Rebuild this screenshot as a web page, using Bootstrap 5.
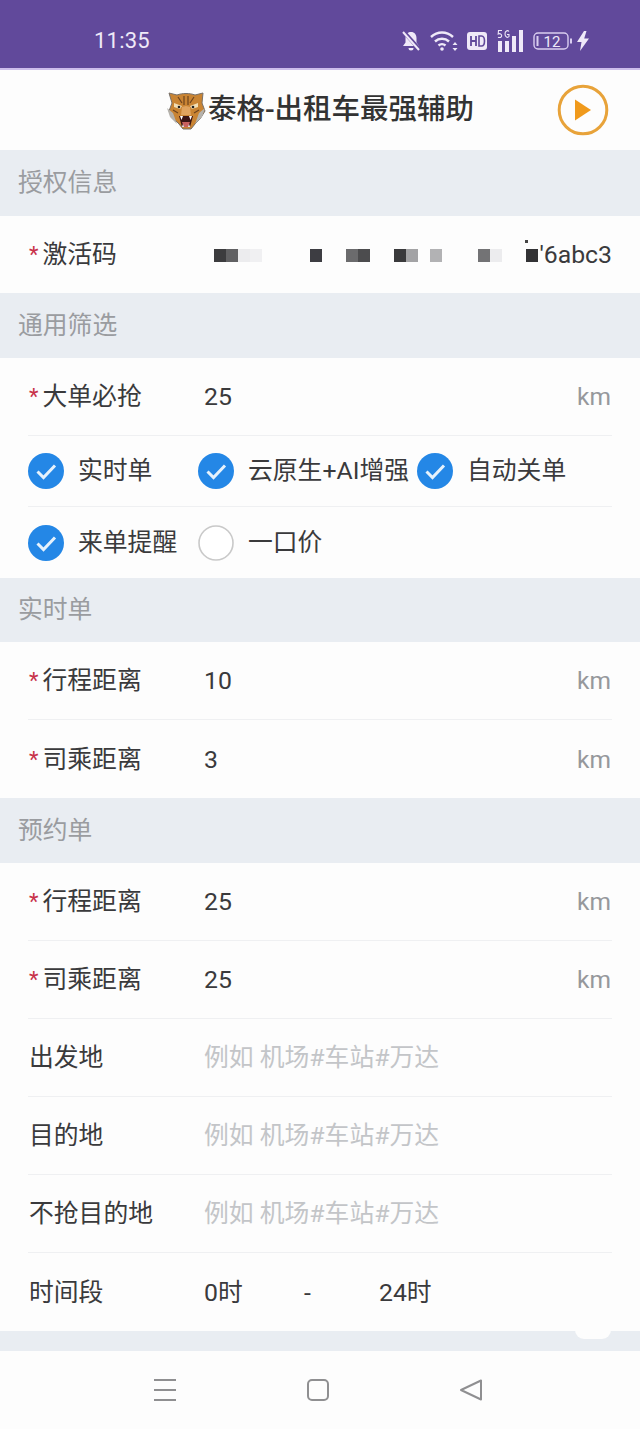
<!DOCTYPE html>
<html lang="zh">
<head>
<meta charset="utf-8">
<title>泰格</title>
<link href="https://cdn.jsdelivr.net/npm/bootstrap@5.3.0/dist/css/bootstrap.min.css" rel="stylesheet">
<style>
html,body{margin:0;height:1429px;overflow:hidden;background:#fdfdfd}
body{font-family:Roboto,"Noto Sans CJK SC",sans-serif;color:#3a3a3c;font-size:24.8px;line-height:1.2}
.status-strip{height:70px;background:#61499b;color:#efe9f8;border-bottom:2px solid #cdbdec;padding:0 51px 0 94px}
.status-time{font-size:22px;letter-spacing:.2px;padding-top:15px}
.status-icons{padding-top:13px;gap:9px}
.head-strip{height:80px;background:#fdfdfd;position:relative}
.head-title{font-size:28.5px;font-weight:500;color:#333;margin-left:2px}
.tiger{width:40px;height:40px}
.play-wrap{position:absolute;right:31px;top:14px;width:52px;height:52px}
.sec-head{background:#e9edf2;height:65px;padding-left:18px;color:#9a9ca0}
.sec-head.h66{height:66px}
.sec-head.h64{height:64px}
.rows{background:#fdfdfd;padding:0 28px}
.form-line{height:78px;border-bottom:1px solid #eff0f2;padding-top:1px}
.form-line.last{border-bottom:0}
.f-label{width:176px;flex:none;padding-left:1px}
.req{color:#c8324a;font-size:22px;margin-right:4px;position:relative;top:-1px}
.f-value{flex:1 1 auto;min-width:0}
.unit{color:#96989c;margin-right:1px;font-size:24.5px}
.ph{color:#c3c5c8}
.masked{height:13px;width:323px;flex:none;margin-right:2px;position:relative}
.px{display:block;width:12px;height:13px;flex:none}
.mask-dot{position:absolute;right:9px;top:-9px;width:3px;height:3px;background:#444}
.chk-row{height:71px;border-bottom:1px solid #eff0f2}
.chk-row.last{border-bottom:0}
.chk-cell{display:flex;align-items:center;gap:14px;flex:none}
.c1{width:170px}
.c2{width:219px}
.tick{width:36px;height:36px;flex:none}
.tail{height:20px;background:#e9edf2;position:relative}
.tail-notch{position:absolute;left:575px;top:-1px;width:36px;height:9px;background:#fdfdfd;border-radius:0 0 14px 14px}
.nav-strip{height:78px;background:#fdfdfd;padding-right:4px}
.nav-spot{width:153px;display:flex;justify-content:center}
</style>
</head>
<body>
<div class="status-strip d-flex justify-content-between align-items-center">
  <div class="status-time">11:35</div>
  <div class="status-icons d-flex align-items-center">
    <svg width="20" height="22" viewBox="0 0 20 22" fill="#efe9f8"><path d="M10 2c3.600 0 5.500 2.700 5.500 6v4.500L18 16H2l2.500-3.500V8C4.500 4.700 6.400 2 10 2z"/><path d="M7.500 18h5a2.500 2.500 0 0 1-5 0z"/><path d="M2 1l17 19" stroke="#61499b" stroke-width="4"/><path d="M2 2l16 18" stroke="#efe9f8" stroke-width="2"/></svg>
    <svg width="28" height="22" viewBox="0 0 28 22" fill="none" stroke="#efe9f8" stroke-width="2.400"><path d="M1 7c6.500-6 15.500-6 22 0"/><path d="M5 11.500c4-3.700 10-3.700 14 0"/><path d="M8.500 15.500c2-1.800 5-1.800 7 0"/><circle cx="12" cy="19" r="1.800" fill="#efe9f8" stroke="none"/><path d="M25 12l-2.500 3h5zM25 21l-2.500-3h5z" fill="#efe9f8" stroke="none"/></svg>
    <svg width="20" height="18" viewBox="0 0 20 18"><rect width="20" height="18" rx="3" fill="#efe9f8"/><path d="M4 4v10M9 4v10M4 9h5" stroke="#61499b" stroke-width="1.800" fill="none"/><path d="M12 4v10h2.500c2 0 3-2 3-5s-1-5-3-5z" stroke="#61499b" stroke-width="1.600" fill="none"/></svg>
    <svg width="28" height="24" viewBox="0 0 28 24" fill="#efe9f8"><rect x="2" y="12" width="4" height="11"/><rect x="9" y="12" width="4" height="11"/><rect x="16" y="7" width="4" height="16"/><rect x="23" y="1" width="4" height="22"/><path d="M6 1.500H2.500L2.200 5c1.800-.8 3.500 0 3.500 1.700S3.800 9 2 8.200M13 2.500C11.500.8 9 2 9 5s2.500 4.200 4 2.500V5.500h-2" fill="none" stroke="#efe9f8" stroke-width="1.100"/></svg>
    <svg width="40" height="20" viewBox="0 0 40 20" fill="none" stroke="#d9cdf0" stroke-width="1.400"><rect x="1" y="2" width="34" height="16" rx="4"/><rect x="3.500" y="5" width="2" height="10" fill="#d9cdf0" stroke="none"/><path d="M38 7.500v5" stroke-width="2"/><text x="19" y="15.500" text-anchor="middle" font-size="15" fill="#efe9f8" stroke="none" font-family="Roboto, sans-serif">12</text></svg>
    <svg width="12" height="20" viewBox="0 0 12 20" fill="#efe9f8" style="margin-left:-5px"><path d="M7 0L0 11h4.500L3 20l9-12.500H7.200L9.500 0z"/></svg>
  </div>
</div>
<div class="head-strip d-flex justify-content-center align-items-center">
  <svg class="tiger" viewBox="0 0 40 40">
    <path d="M3 3l8 2c5-2 13-2 18 0l8-2-1 10 3 8-5 8-5 5-4 5h-8l-4-5-5-5-5-8 3-8z" fill="#c98433" stroke="#77706a" stroke-width="1"/>
    <path d="M1 18l3 9 7 7-4-11zM39 18l-3 9-7 7 4-11z" fill="#b5b2ac"/>
    <path d="M8 13l8 3-2 3-6-2zM32 13l-8 3 2 3 6-2z" fill="#f2deb4"/>
    <path d="M18 6v9M22 6v9M12 7l4 6M28 7l-4 6M7 20l5 3M33 20l-5 3" stroke="#6d431d" stroke-width="1.200" fill="none"/>
    <path d="M16 17l4-1 4 1 1 8h-10z" fill="#e0a45f"/>
    <path d="M13 26h14l-3 11h-8z" fill="#3a1414"/>
    <path d="M16 32h8l-2 5h-4z" fill="#c8605f"/>
    <path d="M14 26l1.500 4 1.500-4zM23 26l1.500 4 1.500-4zM16 37l1-3 1 3zM22 37l1-3 1 3z" fill="#fff"/>
    <circle cx="13" cy="17" r="1.300" fill="#222"/><circle cx="27" cy="17" r="1.300" fill="#222"/>
  </svg>
  <div class="head-title">泰格-出租车最强辅助</div>
  <div class="play-wrap">
    <svg width="52" height="52" viewBox="0 0 52 52"><circle cx="26" cy="26" r="23.800" fill="none" stroke="#e8a33a" stroke-width="3"/><path d="M18 15.500L34 26 18 36.500z" fill="#f09a1c"/></svg>
  </div>
</div>

<div class="sec-head h66 d-flex align-items-center">授权信息</div>
<div class="rows">
  <div class="form-line last d-flex align-items-center" style="height:77px">
    <div class="f-label"><span class="req">*</span>激活码</div>
    <div class="f-value d-flex justify-content-end align-items-center">
      <div class="masked d-flex">
        <span class="px" style="background:#3c3c3e"></span><span class="px" style="background:#616163"></span><span class="px" style="background:#ececee"></span><span class="px" style="background:#f0f0f2;margin-right:48px"></span>
        <span class="px" style="background:#3d3d42;margin-right:24px"></span>
        <span class="px" style="background:#6b6b6d"></span><span class="px" style="background:#4c4c4e;margin-right:24px"></span>
        <span class="px" style="background:#3a3a3c"></span><span class="px" style="background:#a3a3a5;margin-right:12px"></span>
        <span class="px" style="background:#b2b2b4;margin-right:36px"></span>
        <span class="px" style="background:#737375"></span><span class="px" style="background:#ececee;margin-right:24px"></span>
        <span class="px" style="background:#333335"></span>
        <span class="mask-dot"></span>
      </div>
      <div class="text-end">'6abc3</div>
    </div>
  </div>
</div>

<div class="sec-head d-flex align-items-center">通用筛选</div>
<div class="rows">
  <div class="form-line d-flex align-items-center">
    <div class="f-label"><span class="req">*</span>大单必抢</div>
    <div class="f-value">25</div>
    <div class="unit">km</div>
  </div>
  <div class="chk-row d-flex align-items-center">
    <div class="chk-cell c1"><svg class="tick" viewBox="0 0 36 36"><circle cx="18" cy="18" r="18" fill="#2487e6"/><path d="M9.500 18.500l6 6L27 12.500" fill="none" stroke="#e6f2fc" stroke-width="3"/></svg>实时单</div>
    <div class="chk-cell c2"><svg class="tick" viewBox="0 0 36 36"><circle cx="18" cy="18" r="18" fill="#2487e6"/><path d="M9.500 18.500l6 6L27 12.500" fill="none" stroke="#e6f2fc" stroke-width="3"/></svg>云原生+AI增强</div>
    <div class="chk-cell"><svg class="tick" viewBox="0 0 36 36"><circle cx="18" cy="18" r="18" fill="#2487e6"/><path d="M9.500 18.500l6 6L27 12.500" fill="none" stroke="#e6f2fc" stroke-width="3"/></svg>自动关单</div>
  </div>
  <div class="chk-row last d-flex align-items-center">
    <div class="chk-cell c1"><svg class="tick" viewBox="0 0 36 36"><circle cx="18" cy="18" r="18" fill="#2487e6"/><path d="M9.500 18.500l6 6L27 12.500" fill="none" stroke="#e6f2fc" stroke-width="3"/></svg>来单提醒</div>
    <div class="chk-cell c2"><svg class="tick" viewBox="0 0 36 36"><circle cx="18" cy="18" r="17" fill="#fff" stroke="#c9c9c9" stroke-width="1.600"/></svg>一口价</div>
  </div>
</div>

<div class="sec-head h64 d-flex align-items-center">实时单</div>
<div class="rows">
  <div class="form-line d-flex align-items-center">
    <div class="f-label"><span class="req">*</span>行程距离</div>
    <div class="f-value">10</div>
    <div class="unit">km</div>
  </div>
  <div class="form-line last d-flex align-items-center">
    <div class="f-label"><span class="req">*</span>司乘距离</div>
    <div class="f-value">3</div>
    <div class="unit">km</div>
  </div>
</div>

<div class="sec-head d-flex align-items-center">预约单</div>
<div class="rows">
  <div class="form-line d-flex align-items-center">
    <div class="f-label"><span class="req">*</span>行程距离</div>
    <div class="f-value">25</div>
    <div class="unit">km</div>
  </div>
  <div class="form-line d-flex align-items-center">
    <div class="f-label"><span class="req">*</span>司乘距离</div>
    <div class="f-value">25</div>
    <div class="unit">km</div>
  </div>
  <div class="form-line d-flex align-items-center">
    <div class="f-label">出发地</div>
    <div class="f-value ph">例如 机场#车站#万达</div>
  </div>
  <div class="form-line d-flex align-items-center">
    <div class="f-label">目的地</div>
    <div class="f-value ph">例如 机场#车站#万达</div>
  </div>
  <div class="form-line d-flex align-items-center">
    <div class="f-label">不抢目的地</div>
    <div class="f-value ph">例如 机场#车站#万达</div>
  </div>
  <div class="form-line last d-flex align-items-center">
    <div class="f-label">时间段</div>
    <div class="f-value d-flex">
      <span style="width:100px">0时</span><span style="width:75px">-</span><span>24时</span>
    </div>
  </div>
</div>
<div class="tail"><div class="tail-notch"></div></div>
<div class="nav-strip d-flex justify-content-center align-items-center">
  <div class="nav-spot"><svg width="24" height="24" viewBox="0 0 24 24" fill="none" stroke="#8f8f91" stroke-width="2"><path d="M1 2h22M1 12h22M1 22h22"/></svg></div>
  <div class="nav-spot"><svg width="22" height="24" viewBox="0 0 22 24" fill="none" stroke="#8f8f91" stroke-width="2"><rect x="1" y="2" width="20" height="20" rx="4"/></svg></div>
  <div class="nav-spot"><svg width="24" height="24" viewBox="0 0 24 24" fill="none" stroke="#8f8f91" stroke-width="2" stroke-linejoin="round"><path d="M22 2.500v19L2 12z"/></svg></div>
</div>
</body>
</html>
